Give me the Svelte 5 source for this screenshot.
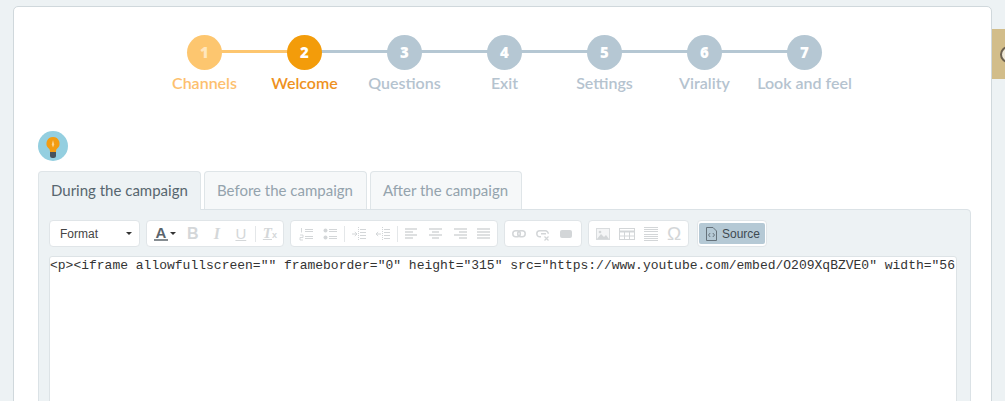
<script>
  const steps = [
    ['1', 'Channels', 'done'], ['2', 'Welcome', 'active'], ['3', 'Questions', ''], ['4', 'Exit', ''],
    ['5', 'Settings', ''], ['6', 'Virality', ''], ['7', 'Look and feel', '']
  ];
  const code = '<p><iframe allowfullscreen="" frameborder="0" height="315" src="https://www.youtube.com/embed/O209XqBZVE0" width="56';
</script>

<div class="page">
  <main class="card">
    <ol class="stepper">
      {#each steps as s, i}
        <li class="step {s[2]}">
          {#if i < steps.length - 1}<span class="line"></span>{/if}
          <span class="dot">{s[0]}</span>
          <span class="label">{s[1]}</span>
        </li>
      {/each}
    </ol>

    <div class="tip">
      <svg width="30" height="30" viewBox="0 0 30 30">
        <circle cx="15" cy="15" r="15" fill="#94cfe0"/>
        <path d="M15 6a6.500 6.500 0 0 0-4.200 11.500c.8.700 1.200 1.600 1.200 3.500h6c0-1.900.4-2.800 1.200-3.500A6.500 6.500 0 0 0 15 6z" fill="#f39c12"/>
        <path d="M15 9l-1.200 4.500 1.200 3 1.200-3z" fill="#fcd48f"/>
        <path d="M12 21h6v3.500a2.500 2.500 0 0 1-2.500 2.500h-1a2.500 2.500 0 0 1-2.500-2.500z" fill="#47525c"/>
      </svg>
    </div>

    <div class="tabs">
      <span class="tab current">During the campaign</span>
      <span class="tab">Before the campaign</span>
      <span class="tab">After the campaign</span>
    </div>

    <section class="panel">
      <div class="toolbar">
        <div class="group format"><span>Format</span><i class="caret"></i></div>

        <div class="group color">
          <span class="a">A</span><i class="caret small"></i>
          <b class="g b">B</b><b class="g i">I</b><b class="g u">U</b><span class="sep"></span><b class="tx"><span>T</span><small>x</small></b>
        </div>

        <div class="group icons lists">
          <svg width="14" height="14" viewBox="0 0 14 14" fill="none" stroke="#d3d6d8"><path d="M6 2.500h8M6 4.500h8M6 9.500h8M6 11.500h8" stroke-width="1.200"/><path d="M2.500 1v4.500M1 8h3v2.500H1V13h3" stroke-width=".9"/></svg>
          <svg width="14" height="14" viewBox="0 0 14 14" fill="none" stroke="#d3d6d8"><path d="M6 2.500h8M6 4.500h8M6 9.500h8M6 11.500h8" stroke-width="1.200"/><circle cx="2.500" cy="3.500" r="2" fill="#d3d6d8" stroke="none"/><circle cx="2.500" cy="10.500" r="2" fill="#d3d6d8" stroke="none"/></svg>
          <span class="sep"></span>
          <svg width="14" height="14" viewBox="0 0 14 14" fill="none" stroke="#d3d6d8"><path d="M6.500 0v14" stroke-dasharray="1 1"/><path d="M8 2.500h6M8 5.500h6M8 8.500h6M8 11.500h6M0 7h5M2.800 5L5 7l-2.200 2"/></svg>
          <svg width="14" height="14" viewBox="0 0 14 14" fill="none" stroke="#d3d6d8"><path d="M6.500 0v14" stroke-dasharray="1 1"/><path d="M8 2.500h6M8 5.500h6M8 8.500h6M8 11.500h6M0 7h5M2.200 5L0 7l2.200 2"/></svg>
          <span class="sep"></span>
          <svg width="14" height="14" viewBox="0 0 14 14" stroke="#d3d6d8" stroke-width="1.500"><path d="M0 2h12M0 5h8M0 8h12M0 11h8"/></svg>
          <svg width="14" height="14" viewBox="0 0 14 14" stroke="#d3d6d8" stroke-width="1.500"><path d="M0 2h13M3 5h7M0 8h13M3 11h7"/></svg>
          <svg width="14" height="14" viewBox="0 0 14 14" stroke="#d3d6d8" stroke-width="1.500"><path d="M1 2h13M6 5h8M1 8h13M6 11h8"/></svg>
          <svg width="14" height="14" viewBox="0 0 14 14" stroke="#d3d6d8" stroke-width="1.500"><path d="M0 2h13M0 5h13M0 8h13M0 11h13"/></svg>
        </div>

        <div class="group icons link">
          <svg width="14" height="14" viewBox="0 0 14 14" fill="none" stroke="#d3d6d8" stroke-width="1.500"><rect x=".8" y="3.800" width="7.500" height="6" rx="3"/><rect x="5.700" y="3.800" width="7.500" height="6" rx="3"/></svg>
          <svg width="14" height="14" viewBox="0 0 14 14" fill="none" stroke="#d3d6d8" stroke-width="1.500"><path d="M5 9.800H3.800a3 3 0 0 1 0-6h5.500a3 3 0 0 1 3 3M5 6.800h5"/><path d="M8.500 9.500l4 4M12.500 9.500l-4 4" stroke-width="1.200"/></svg>
          <svg width="12" height="14" viewBox="0 0 12 14"><rect x="0" y="3" width="12" height="8" rx="2" fill="#d3d6d8"/></svg>
        </div>

        <div class="group icons media">
          <svg width="14" height="14" viewBox="0 0 14 14"><rect x="0" y="1" width="14" height="12" fill="#d9dcde"/><rect x="1" y="2" width="12" height="10" fill="#f4f5f6"/><path d="M1 12l4-5 3 3 2-2 3 4z" fill="#d3d6d8"/><circle cx="4" cy="5" r="1.300" fill="#d3d6d8"/></svg>
          <svg width="16" height="14" viewBox="0 0 16 14" fill="none" stroke="#d3d6d8"><rect x=".5" y="1.500" width="15" height="11"/><path d="M0 4.500h16" stroke-width="2"/><path d="M5.500 5v8M10.500 5v8M0 9h16"/></svg>
          <svg width="14" height="16" viewBox="0 0 14 16" stroke="#d3d6d8"><path d="M0 1.500h14M0 3.500h14M0 5.500h14M0 8.500h14M0 10.500h14M0 12.500h14M0 14.500h14"/></svg>
          <span class="omega">Ω</span>
        </div>

        <div class="group source">
          <span class="on">
            <svg width="11" height="14" viewBox="0 0 11 14" fill="none" stroke="#66727b"><path d="M.5.500h6.500l3.500 3.500v9.500H.5z"/><path d="M4.200 6L2.500 8l1.700 2M6.800 6l1.700 2-1.700 2"/></svg>
            Source
          </span>
        </div>
      </div>

      <div class="editor">{code}</div>
    </section>
  </main>
  <aside class="promo"><span class="ring"></span></aside>
</div>

<style>
  :global(body) { margin: 0; background: #edf2f4; overflow: hidden; }
  .page { height: 401px; overflow: hidden; position: relative; padding: 6px 0 0 13px; box-sizing: border-box; font-family: "Open Sans", "Liberation Sans", sans-serif; }
  .card { width: 979px; height: 420px; box-sizing: border-box; background: #fff; border: 1px solid #d0d8dc; border-radius: 5px; padding: 28px 20px 0 24px; }
  .stepper { list-style: none; margin: 0; padding: 0 0 0 116.5px; display: flex; height: 96px; }
  .step { width: 100px; display: flex; flex-direction: column; align-items: center; position: relative; }
  .dot { width: 35px; height: 35px; border-radius: 50%; background: #b5c7d3; color: #fff; font: 800 15px/34px "Open Sans", sans-serif; text-align: center; position: relative; }
  .line { position: absolute; left: 50px; top: 15px; width: 100px; height: 3px; background: #b5c7d3; }
  .label { margin-top: 3px; font: 600 16px/20px Lato, sans-serif; color: #b5c3cf; white-space: nowrap; }
  .done .dot { background: #fdc66f; color: #ffe6bd; }
  .done .line { background: #fdc66f; }
  .done .label { color: #fdc06e; }
  .active .dot { background: #f39c0a; }
  .active .label { color: #ee9121; }
  .tip { height: 30px; }
  .tip svg { display: block; }
  .tabs { display: flex; gap: 3px; margin-top: 10px; height: 38px; }
  .tab { padding: 0 12px; box-sizing: border-box; font: 400 15px/37px Lato, sans-serif; color: #94a3ad; background: #f6f8f9; border: 1px solid #dfe5e8; border-bottom: 0; border-radius: 4px 4px 0 0; white-space: nowrap; }
  .tab:nth-child(1), .tab:nth-child(2) { width: 163px; }
  .tab:nth-child(3) { width: 152px; }
  .tab.current { color: #57666f; background: #edf2f4; height: 39px; position: relative; z-index: 1; }
  .panel { width: 933px; height: 300px; box-sizing: border-box; background: #edf2f4; border: 1px solid #dbe2e6; border-radius: 0 4px 0 0; padding: 10px 13px 0 10px; }
  .toolbar { display: flex; gap: 6px; height: 27px; }
  .group { display: flex; align-items: center; box-sizing: border-box; height: 27px; background: #fff; border: 1px solid #e0e5e8; border-radius: 4px; flex: none; }
  .format { width: 91px; padding: 0 7px 0 10px; justify-content: space-between; font: 12px "Liberation Sans", sans-serif; color: #444; }
  .caret { width: 0; height: 0; border: 3px solid transparent; border-top-color: #333; border-bottom: 0; }
  .color { width: 138px; padding-left: 7px; }
  .a { font: 700 15px/13px "Liberation Sans", sans-serif; color: #5a646c; border-bottom: 2px solid #868d92; padding: 0 1.500px; }
  .caret.small { margin-left: 2px; margin-right: 5px; }
  .g { font: 700 16px "Liberation Sans", sans-serif; color: #d4d7d9; width: 24px; text-align: center; }
  .g.i { font-family: "Liberation Serif", serif; font-style: italic; }
  .g.u { text-decoration: underline; font-weight: 400; font-size: 15px; }
  .color .sep { margin-left: 2px; }
  .tx { margin-left: 7px; font: italic 700 15px "Liberation Serif", serif; color: #d4d7d9; }
  .tx span { text-decoration: underline; }
  .tx small { font: 700 9px "Liberation Sans", sans-serif; }
  .sep { width: 1px; height: 16px; background: #e4e7e9; flex: none; }
  .icons { gap: 10px; padding-left: 7px; }
  .icons svg { flex: none; }
  .lists { width: 208px; padding-left: 8px; }
  .lists .sep { margin: 0 -3px; }
  .link { width: 78px; }
  .media { width: 101px; gap: 9px; }
  .omega { font: 19px "Liberation Sans", sans-serif; color: #d3d6d8; line-height: 1; }
  .source { width: 70px; padding: 2px 1px; margin-left: 2px; }
  .on { display: flex; align-items: center; gap: 5px; width: 100%; height: 100%; box-sizing: border-box; padding-left: 7px; background: #b5c9d5; border-radius: 2px; font: 12px "Liberation Sans", sans-serif; color: #3f4a52; }
  .editor { margin: 9px 0 0 0; width: 908px; height: 260px; box-sizing: border-box; background: #fff; border: 1px solid #dde3e6; border-radius: 3px 3px 0 0; font: 13px/15px "Liberation Mono", monospace; color: #333; white-space: nowrap; overflow: hidden; padding: 1px 0 0 0; }
  .promo { position: absolute; right: 0; top: 29px; width: 13px; height: 50px; background: #d2bd8a; overflow: hidden; }
  .ring { position: absolute; left: 8px; top: 17px; width: 17px; height: 17px; box-sizing: border-box; border: 2px solid #6d6250; border-radius: 50%; background: #efe9d8; }
</style>
